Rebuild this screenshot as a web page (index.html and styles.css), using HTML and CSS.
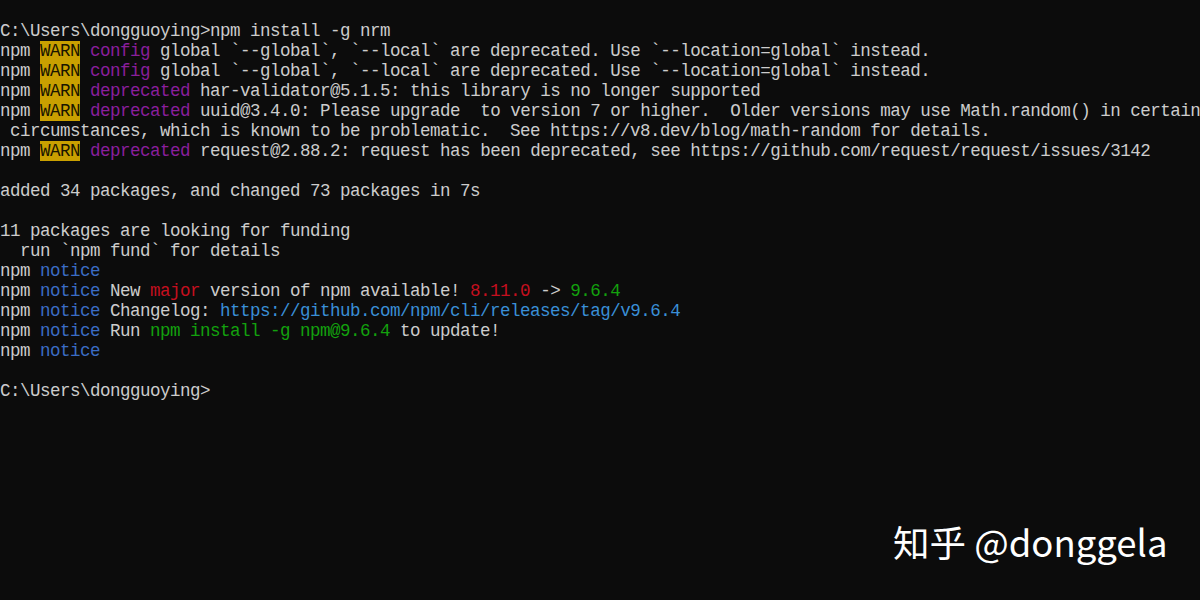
FILE: index.html
```html
<!DOCTYPE html>
<html lang="zh">
<head>
<meta charset="utf-8">
<link rel="stylesheet" href="styles.css">
</head>
<body>
<div class="term">
<pre class="out">C:\Users\dongguoying&gt;npm install -g nrm
npm <span class="warn">WARN</span> <span class="mag">config</span> global `--global`, `--local` are deprecated. Use `--location=global` instead.
npm <span class="warn">WARN</span> <span class="mag">config</span> global `--global`, `--local` are deprecated. Use `--location=global` instead.
npm <span class="warn">WARN</span> <span class="mag">deprecated</span> har-validator@5.1.5: this library is no longer supported
npm <span class="warn">WARN</span> <span class="mag">deprecated</span> uuid@3.4.0: Please upgrade  to version 7 or higher.  Older versions may use Math.random() in certain
 circumstances, which is known to be problematic.  See https://v8.dev/blog/math-random for details.
npm <span class="warn">WARN</span> <span class="mag">deprecated</span> request@2.88.2: request has been deprecated, see https://github.com/request/request/issues/3142

added 34 packages, and changed 73 packages in 7s

11 packages are looking for funding
  run `npm fund` for details
npm <span class="blue">notice</span>
npm <span class="blue">notice</span> New <span class="red">major</span> version of npm available! <span class="red">8.11.0</span> -&gt; <span class="green">9.6.4</span>
npm <span class="blue">notice</span> Changelog: <span class="cyan">https://github.com/npm/cli/releases/tag/v9.6.4</span>
npm <span class="blue">notice</span> Run <span class="green">npm install -g npm@9.6.4</span> to update!
npm <span class="blue">notice</span>

C:\Users\dongguoying&gt;</pre>
</div>
<div class="mark">知乎 @donggela</div>
</body>
</html>
```
FILE: styles.css
```css
html, body {
  margin: 0;
  padding: 0;
  background: #0c0c0c;
}
body {
  width: 1200px;
  height: 600px;
  overflow: hidden;
  position: relative;
}
.term {
  padding-top: 21px;
}
.out {
  margin: 0;
  font-family: "Liberation Mono", "Courier New", monospace;
  font-size: 17.5px;
  letter-spacing: -0.5px;
  line-height: 20px;
  color: #cccccc;
  white-space: pre;
}
.warn {
  display: inline-block;
  height: 20px;
  background: #c9a000;
  color: #1a1500;
}
.mag { color: #8a1f9c; }
.blue { color: #3b6cc4; }
.red { color: #c50f1f; }
.green { color: #13a10e; }
.cyan { color: #3a8fd6; }
.mark {
  position: absolute;
  left: 893px;
  top: 516px;
  font-family: "Noto Sans CJK SC", "Noto Sans", sans-serif;
  font-size: 36.5px;
  line-height: 52px;
  color: #ffffff;
}
```
